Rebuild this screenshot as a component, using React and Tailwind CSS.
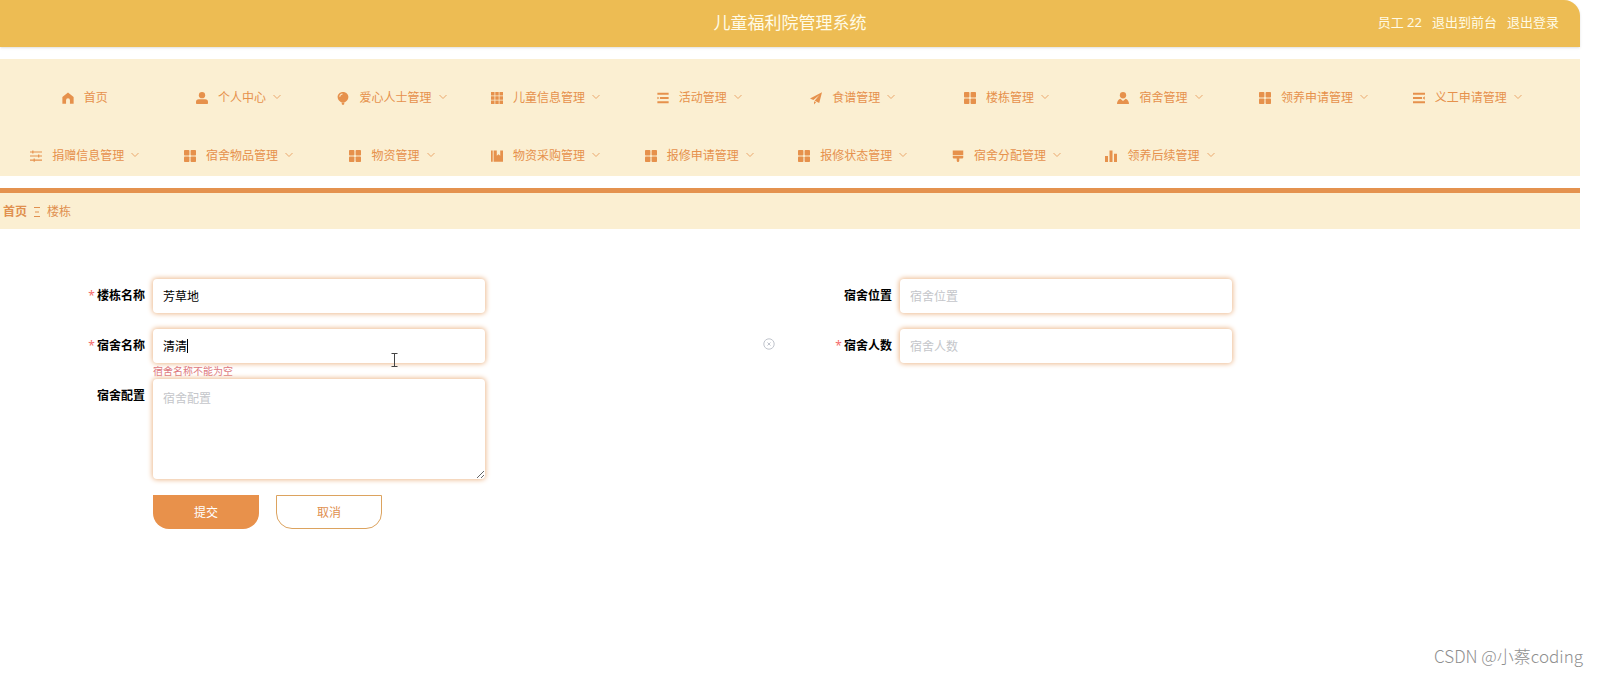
import { useState } from "react";

const HomeIcon = () => (
  <path d="M8 .5.500 6.700V15.500H5.400V11a2.600 2.600 0 0 1 5.200 0v4.500h4.900V6.700z" />
);

const UserIcon = () => (
  <>
    <circle cx="8" cy="4.2" r="4.2" />
    <path d="M0 15v-1.600A3.800 3.800 0 0 1 3.800 9.600h8.400a3.800 3.800 0 0 1 3.800 3.800V15c0 .6-.4 1-1 1H1c-.6 0-1-.4-1-1z" />
  </>
);

const BalloonIcon = () => (
  <>
    <path
      fillRule="evenodd"
      d="M8 0c4.100 0 7.200 2.900 7.200 6.800 0 3.500-2.900 6.600-5.900 7.400H6.700C3.700 13.400.8 10.300.8 6.800.8 2.900 3.900 0 8 0zM7.400 2.100C4.900 2.300 3.200 4 3.100 6.300h1.300c.1-1.700 1.200-2.900 3-3z"
    />
    <path d="M6.200 14.800h3.600L9.300 17H6.700z" />
  </>
);

const GridIcon = () => (
  <path d="M0 0h4.700v4.700H0zM5.700 0h4.600v4.700H5.700zM11.300 0H16v4.700h-4.700zM0 5.700h4.700v4.600H0zM5.700 5.700h4.600v4.600H5.700zM11.300 5.700H16v4.600h-4.700zM0 11.300h4.700V16H0zM5.700 11.300h4.600V16H5.700zM11.300 11.300H16V16h-4.700z" />
);

const UnfoldIcon = () => (
  <path d="M.5 1h15v2.800H.5zM4 6.600h11.500v2.800H4zM.5 12.200h15V15H.5zM.5 6.200 3.400 8 .5 9.800z" />
);

const FoldIcon = () => (
  <path d="M0 1h16v2.800H0zM0 6.600h12v2.800H0zM0 12.200h16V15H0zM15.700 5.800 12.700 8l3 2.200z" />
);

const PlaneIcon = () => (
  <path d="M16 .3 0 8.600l4.500 2.100L12.600 4 6.200 11.500l6.100 3zM5.400 12.200V16.500l2.700-3z" />
);

const MenuIcon = () => (
  <>
    <rect x="0" y="0" width="7.200" height="7.200" rx="1" />
    <rect x="8.800" y="0" width="7.200" height="7.200" rx="1" />
    <rect x="0" y="8.800" width="7.200" height="7.200" rx="1" />
    <rect x="8.800" y="8.800" width="7.200" height="7.200" rx="1" />
  </>
);

const CustomIcon = () => (
  <>
    <circle cx="8" cy="4.300" r="4.200" />
    <path d="M4.400 9 8 12l3.600-3c2.700 1 4.400 3.600 4.400 7H0c0-3.400 1.700-6 4.400-7z" />
  </>
);

const SlidersIcon = () => (
  <path d="M0 1.900h3V.5h1.600v1.400H16v1.400H4.600v1.400H3V3.300H0zM0 7.300h10.800V5.900h1.600v1.400H16v1.400h-3.600v1.400h-1.600V8.700H0zM0 12.800h4.800v-1.400h1.600v1.400H16v1.400H6.400v1.400H4.800v-1.400H0z" />
);

const NotebookIcon = () => (
  <path d="M0 .5h2.300v15H0zM3.500.5h4.200v7.300l2.300-2 2.300 2V.5H16v15H3.500z" />
);

const BrushIcon = () => (
  <path d="M1 .5h14v6.200H1zM1 7.700h14v2.200a1.500 1.500 0 0 1-1.500 1.500H9.700v2.900a1.700 1.700 0 0 1-3.400 0v-2.900H2.500A1.500 1.500 0 0 1 1 9.900z" />
);

const ChartIcon = () => (
  <path d="M0 8h4v8H0zM6 .5h4V16H6zM12 5h4v11h-4z" />
);

const menus = [
  { title: "首页", icon: HomeIcon, single: true },
  { title: "个人中心", icon: UserIcon },
  { title: "爱心人士管理", icon: BalloonIcon },
  { title: "儿童信息管理", icon: GridIcon },
  { title: "活动管理", icon: UnfoldIcon },
  { title: "食谱管理", icon: PlaneIcon },
  { title: "楼栋管理", icon: MenuIcon },
  { title: "宿舍管理", icon: CustomIcon },
  { title: "领养申请管理", icon: MenuIcon },
  { title: "义工申请管理", icon: FoldIcon },
  { title: "捐赠信息管理", icon: SlidersIcon },
  { title: "宿舍物品管理", icon: MenuIcon },
  { title: "物资管理", icon: MenuIcon },
  { title: "物资采购管理", icon: NotebookIcon },
  { title: "报修申请管理", icon: MenuIcon },
  { title: "报修状态管理", icon: MenuIcon },
  { title: "宿舍分配管理", icon: BrushIcon },
  { title: "领养后续管理", icon: ChartIcon },
];

const inputClass =
  "block w-[332px] rounded-sm bg-white px-[10px] text-xs text-black outline-none placeholder:text-[#c4c6ca] shadow-[0_0_5px_1px_#edbb90]";

function Header() {
  return (
    <header className="grid h-[47px] grid-cols-3 items-center rounded-tr-2xl bg-[#edbc53] px-[21px] pb-px text-[#fffbe6] shadow-sm">
      <h1 className="col-start-2 text-center text-[17px]">儿童福利院管理系统</h1>
      <div className="flex justify-end gap-[10px] text-[13px]">
        <span>员工 22</span>
        <button type="button">退出到前台</button>
        <button type="button">退出登录</button>
      </div>
    </header>
  );
}

function NavItem({ title, icon: Icon, single }) {
  return (
    <li>
      <button type="button" className="flex h-[42px] w-full items-center justify-center pt-[2px] text-xs whitespace-nowrap">
        <svg viewBox="0 0 16 16" className="mr-[10px] size-3 shrink-0 overflow-visible" fill="currentColor">
          <Icon />
        </svg>
        {title}
        {!single && (
          <svg viewBox="0 0 8 8" className="mb-[2px] ml-[7px] size-2 shrink-0 opacity-75" fill="none" stroke="currentColor">
            <path d="M.5 2 4 5.500 7.500 2" />
          </svg>
        )}
      </button>
    </li>
  );
}

function FormItem({ id, label, required, error, className = "", children }) {
  return (
    <div className={`flex items-start gap-2 ${className}`}>
      <label htmlFor={id} className="w-[111px] shrink-0 text-right text-xs leading-[34px] font-bold text-black">
        {required && <span className="mr-[2px] font-normal text-[#f56c6c]">*</span>}
        {label}
      </label>
      <div className="relative flex-1">
        {children}
        {error && <p className="absolute top-full left-0 text-[10px] leading-4 text-[#dd7880]">{error}</p>}
      </div>
    </div>
  );
}

export default function App() {
  const [form, setForm] = useState({
    building: "芳草地",
    location: "",
    name: "清清",
    count: "",
    config: "",
  });

  const update = (key) => (e) => setForm({ ...form, [key]: e.target.value });

  return (
    <div className="relative min-h-screen bg-white pr-[18px] font-['Noto_Sans','Noto_Sans_CJK_SC',sans-serif]">
      <Header />

      <nav className="mt-3 bg-[#fbefd2] pt-[17px] pr-9 pl-2 text-[#e6914c]">
        <ul className="grid grid-cols-10 gap-y-4">
          {menus.map((item) => (
            <NavItem key={item.title} {...item} />
          ))}
        </ul>
      </nav>

      {/* Breadcrumb */}
      <div className="mt-3 flex h-[41px] items-center gap-[7px] border-t-[5px] border-[#e4924f] bg-[#fbefd2] pt-px pl-[3px] text-xs text-[#e0904f]">
        <a href="#" className="font-bold">首页</a>
        <svg viewBox="0 0 6 10" className="h-[10px] w-[6px]" stroke="currentColor" fill="none">
          <path d="M0 .5h6M1 5h4M0 9.500h6" />
        </svg>
        <span>楼栋</span>
      </div>

      <form className="grid grid-cols-2 gap-y-4 pt-[50px] pr-[52px] pl-[34px]" onSubmit={(e) => e.preventDefault()}>
        <FormItem id="building" label="楼栋名称" required>
          <input id="building" className={`${inputClass} h-[34px]`} value={form.building} onChange={update("building")} />
        </FormItem>
        <FormItem id="location" label="宿舍位置">
          <input id="location" placeholder="宿舍位置" className={`${inputClass} h-[34px]`} value={form.location} onChange={update("location")} />
        </FormItem>

        <FormItem id="name" label="宿舍名称" required error="宿舍名称不能为空">
          <input id="name" className={`${inputClass} h-[34px]`} value={form.name} onChange={update("name")} />
          {/* Text caret and mouse pointer */}
          <span className="absolute top-[10px] left-[34px] h-[14px] w-px bg-black" />
          <svg viewBox="0 0 7 14" className="absolute top-6 left-[238px] h-[14px] w-[7px]" fill="none" stroke="#444">
            <path d="M.5 .5h6M3.500 1v12M.5 13.500h6" />
          </svg>
          <button type="button" aria-label="清空" className="absolute top-[9px] right-[6px] text-[#c0c4cc]">
            <svg viewBox="0 0 12 12" className="size-3" fill="none" stroke="currentColor">
              <circle cx="6" cy="6" r="5.200" />
              <path d="m4.500 4.500 3 3M7.500 4.500l-3 3" />
            </svg>
          </button>
        </FormItem>
        <FormItem id="count" label="宿舍人数" required>
          <input id="count" placeholder="宿舍人数" className={`${inputClass} h-[34px]`} value={form.count} onChange={update("count")} />
        </FormItem>

        <FormItem id="config" label="宿舍配置" className="col-span-2">
          <textarea id="config" placeholder="宿舍配置" className={`${inputClass} h-[100px] resize py-3`} value={form.config} onChange={update("config")} />
        </FormItem>

        <div className="col-span-2 flex gap-[17px] pl-[119px] text-xs">
          <button type="submit" className="h-[34px] w-[106px] rounded-b-2xl bg-[#e8914b] pt-[2px] text-white">提交</button>
          <button type="button" className="h-[34px] w-[106px] rounded-b-2xl border border-[#dca35f] bg-white pt-[2px] text-[#e0904f]">取消</button>
        </div>
      </form>

      <p className="absolute right-[15px] bottom-[6px] font-['Noto_Sans_CJK_SC',sans-serif] text-[17px] leading-7 font-light text-[#8f8f8f]">
        CSDN @小蔡coding
      </p>
    </div>
  );
}
